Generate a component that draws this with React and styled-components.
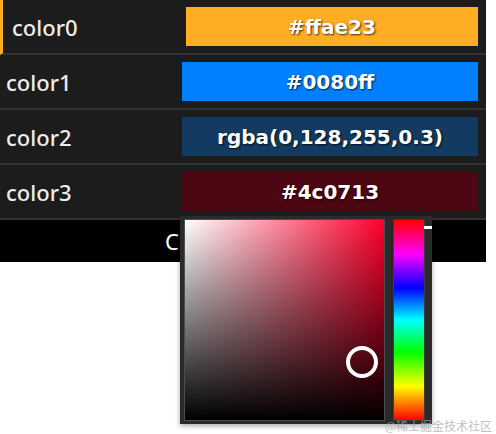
import styled, { createGlobalStyle } from "styled-components";

const GlobalStyle = createGlobalStyle`
  html, body {
    margin: 0;
    padding: 0;
    background: #ffffff;
  }
  * {
    box-sizing: border-box;
  }
`;

const colors = [
  { name: "color0", value: "#ffae23", active: true },
  { name: "color1", value: "#0080ff" },
  { name: "color2", value: "rgba(0,128,255,0.3)" },
  { name: "color3", value: "#4c0713" },
];

const Page = styled.div`
  position: relative;
  width: 496px;
  height: 434px;
`;

const Panel = styled.div`
  width: 486px;
  background-color: #1c1c1c;
  display: flex;
  flex-direction: column;
`;

const Row = styled.div`
  display: flex;
  align-items: center;
  height: 55px;
  padding-right: 8px;
  border-bottom: 2px solid #323232;
  border-left: ${(p) => (p.$active ? "3px solid #ffae23" : "0")};
  padding-left: ${(p) => (p.$active ? "1px" : "0")};
`;

const Label = styled.div`
  flex: 0 0 182px;
  padding-left: ${(p) => (p.$active ? "8px" : "6px")};
  font-family: "Noto Sans", "Open Sans", sans-serif;
  font-weight: 500;
  font-size: 22px;
  color: #ececec;
`;

const Swatch = styled.div`
  flex: 1;
  height: 39px;
  display: flex;
  align-items: center;
  justify-content: center;
  background-color: ${(p) => p.$color};
  font-family: "DejaVu Sans", sans-serif;
  font-weight: bold;
  font-size: 20px;
  color: #ffffff;
  text-shadow: 1px 1px 2px rgba(0, 0, 0, 0.75);
`;

const Footer = styled.div`
  height: 42px;
  background-color: #000000;
  display: flex;
  align-items: center;
  justify-content: center;
  font-family: "Noto Sans", "Open Sans", sans-serif;
  font-size: 22px;
  letter-spacing: 3px;
  color: #ffffff;
`;

const Picker = styled.div`
  position: absolute;
  left: 180px;
  top: 216px;
  display: flex;
  gap: 8px;
  padding: 3px 7px 3px 4px;
  background-color: #2a2a2a;
  box-shadow: 0 2px 5px rgba(0, 0, 0, 0.35);
`;

const SatArea = styled.div`
  position: relative;
  width: 201px;
  height: 202px;
  border: 1px solid #4e4e4e;
  background:
    linear-gradient(to top, #000000, rgba(0, 0, 0, 0)),
    linear-gradient(to right, #ffffff, rgba(255, 255, 255, 0)),
    ${(p) => p.$hue};
`;

const Handle = styled.div`
  position: absolute;
  left: ${(p) => p.$x}px;
  top: ${(p) => p.$y}px;
  width: 32px;
  height: 32px;
  border-radius: 50%;
  border: 4px solid #ffffff;
`;

const HueBar = styled.div`
  position: relative;
  width: 32px;
  height: 202px;
  border: 1px solid #3c3c3c;
  background: linear-gradient(
    to bottom,
    #ff0000 0%,
    #ff00ff 17%,
    #0000ff 34%,
    #00ffff 50%,
    #00ff00 66%,
    #ffff00 83%,
    #ff0000 100%
  );
`;

const HueMarker = styled.div`
  position: absolute;
  right: -8px;
  top: ${(p) => p.$y}px;
  width: 8px;
  height: 3px;
  background-color: #ffffff;
`;

const Watermark = styled.div`
  position: absolute;
  right: 4px;
  bottom: 0;
  font-family: "Noto Sans CJK SC", sans-serif;
  font-size: 12px;
  color: rgba(170, 170, 170, 0.75);
`;

export default function App() {
  return (
    <Page>
      <GlobalStyle />
      <Panel>
        {colors.map((c) => (
          <Row key={c.name} $active={c.active}>
            <Label $active={c.active}>{c.name}</Label>
            <Swatch $color={c.value}>{c.value}</Swatch>
          </Row>
        ))}
        <Footer>Copy Colors</Footer>
      </Panel>

      <Picker>
        <SatArea $hue="#ff002c">
          <Handle $x={161} $y={126} />
        </SatArea>
        <HueBar>
          <HueMarker $y={6} />
        </HueBar>
      </Picker>

      <Watermark>@稀土掘金技术社区</Watermark>
    </Page>
  );
}
